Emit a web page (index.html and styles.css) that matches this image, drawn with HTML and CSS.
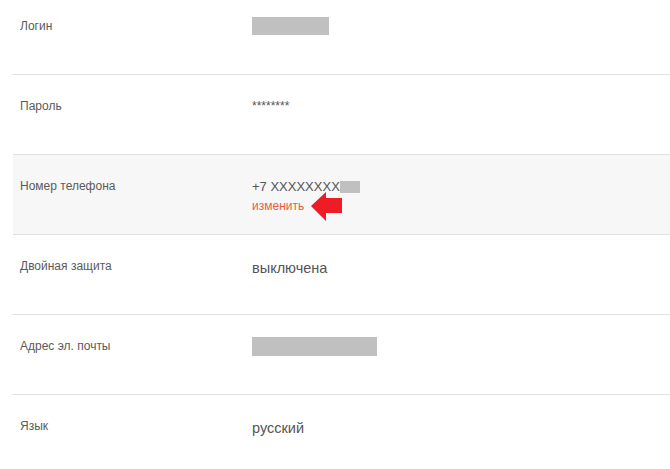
FILE: index.html
```html
<!DOCTYPE html>
<html>
<head>
  <title>Настройки профиля</title>
  <link rel="stylesheet" href="styles.css">
</head>
<body>
  <div class="settings">
    <div class="row">
      <div class="label">Логин</div>
      <div class="value"><span class="hidden login"></span></div>
    </div>

    <div class="row">
      <div class="label">Пароль</div>
      <div class="value stars">********</div>
    </div>

    <div class="row active">
      <div class="label">Номер телефона</div>
      <div class="value phone">
        <div>+7 XXXXXXXX<span class="hidden tail"></span></div>
        <div class="change">
          <a href="#">изменить</a>
          <svg class="arrow" width="31" height="29" viewBox="0 0 31 29">
            <polygon points="0,14 15,0 15,6 31,6 31,21 15,21 15,29" fill="#ee1c25" />
          </svg>
        </div>
      </div>
    </div>

    <div class="row">
      <div class="label">Двойная защита</div>
      <div class="value big">выключена</div>
    </div>

    <div class="row">
      <div class="label">Адрес эл. почты</div>
      <div class="value"><span class="hidden email"></span></div>
    </div>

    <div class="row last">
      <div class="label">Язык</div>
      <div class="value big">русский</div>
    </div>
  </div>
</body>
</html>
```

FILE: styles.css
```css
body {
  margin: 0;
  background: #fff;
  font-family: "Liberation Sans", Arial, sans-serif;
  color: #555;
  overflow: hidden;
}
.settings {
  margin-top: -5px;
  margin-left: 13px;
}
.row {
  display: flex;
  height: 79px;
  padding: 0 0 0 7px;
  border-bottom: 1px solid #e0e0e0;
}
.row.last {
  border-bottom: none;
}
.row.active {
  background: #f7f7f7;
}
.label {
  width: 232px;
  padding-top: 24px;
  font-size: 12px;
  line-height: 15px;
  color: #5a5a5a;
}
.value {
  padding-top: 24px;
  font-size: 14px;
  line-height: 17px;
  color: #555;
}
.value.stars {
  font-size: 12px;
  line-height: 15px;
}
.value.big {
  font-size: 14.5px;
  line-height: 18px;
}
.hidden {
  display: inline-block;
  background: #c0c0c0;
  vertical-align: top;
}
.hidden.login {
  width: 77px;
  height: 18px;
  margin-top: -2px;
}
.hidden.email {
  width: 125px;
  height: 19px;
  margin-top: -2px;
}
.phone {
  font-size: 13px;
  padding-top: 23px;
}
.hidden.tail {
  width: 20px;
  height: 12px;
  margin-top: 3px;
}
.change {
  display: flex;
  align-items: center;
  margin-top: -3px;
}
.change a {
  font-size: 12px;
  color: #e8613b;
  text-decoration: none;
}
.arrow {
  margin-left: 7px;
}
```
